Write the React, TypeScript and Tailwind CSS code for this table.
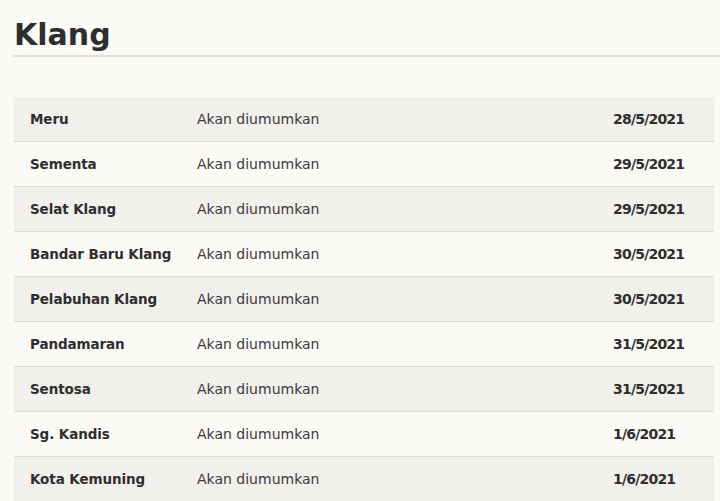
import React from 'react';

const rows = [
  { place: 'Meru', status: 'Akan diumumkan', date: '28/5/2021' },
  { place: 'Sementa', status: 'Akan diumumkan', date: '29/5/2021' },
  { place: 'Selat Klang', status: 'Akan diumumkan', date: '29/5/2021' },
  { place: 'Bandar Baru Klang', status: 'Akan diumumkan', date: '30/5/2021' },
  { place: 'Pelabuhan Klang', status: 'Akan diumumkan', date: '30/5/2021' },
  { place: 'Pandamaran', status: 'Akan diumumkan', date: '31/5/2021' },
  { place: 'Sentosa', status: 'Akan diumumkan', date: '31/5/2021' },
  { place: 'Sg. Kandis', status: 'Akan diumumkan', date: '1/6/2021' },
  { place: 'Kota Kemuning', status: 'Akan diumumkan', date: '1/6/2021' },
];

const App = () => {
  return (
    <div className="min-h-screen bg-[#fbfaf7] text-[#333] font-['DejaVu_Sans',sans-serif] pl-[14px] pr-[6px]">
      <h1 className="pt-[17px] pb-[2px] text-[30px] font-bold leading-[36px] text-[#2e2e2e] border-b-2 border-[#e0dfdc] -ml-px pl-px -mr-[6px]">
        Klang
      </h1>
      <div className="mt-[40px]">
        {rows.map((r, i) => (
          <div
            key={r.place}
            className={
              'grid grid-cols-[183px_416px_1fr] h-[45px] items-center border-b border-[#dddcd9] ' +
              (i % 2 === 0 ? 'bg-[#f1f0ed]' : 'bg-[#fbfaf7]')
            }
          >
            <div className="pl-4 font-bold text-[13.5px] tracking-[-0.1px] text-[#2e2e2e]">{r.place}</div>
            <div className="text-[14px] text-[#3a3a3a]">{r.status}</div>
            <div className="font-bold text-[14px] text-[#2e2e2e] tracking-[-0.8px]">{r.date}</div>
          </div>
        ))}
      </div>
    </div>
  );
};

export default App;
